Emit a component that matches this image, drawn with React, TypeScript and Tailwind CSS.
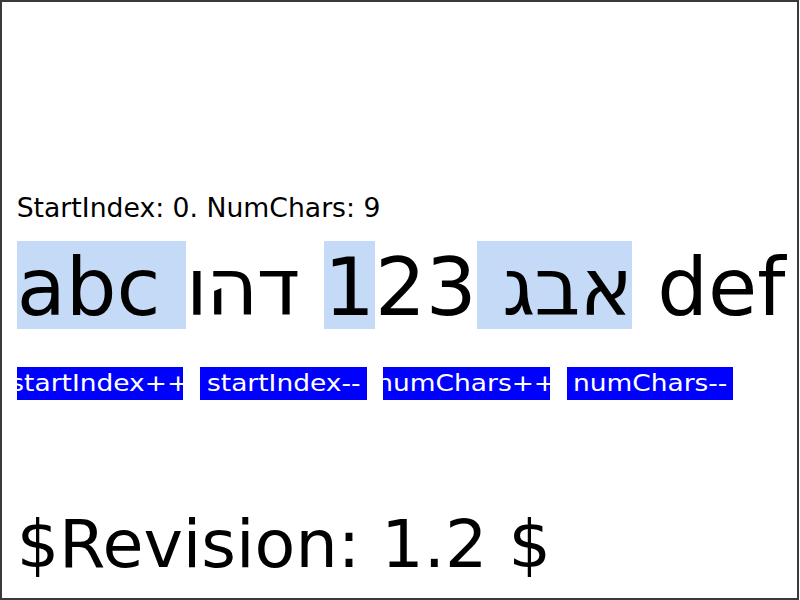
import React from "react";

const buttons = ["startIndex++", "startIndex--", "numChars++", "numChars--"];

const App: React.FC = () => {
  return (
    <div className="w-[800px] h-[600px] bg-white font-['DejaVu_Sans',sans-serif] text-black">
      <div className="w-[799px] h-[600px] border-2 border-[#3a3a3a] pl-[14.67px] pt-[190px] flex flex-col">
        <div className="text-[26.67px] leading-[32px] whitespace-pre">
          StartIndex: 0. NumChars: 9
        </div>

        {/* selected range: first 9 chars, bidi splits it into pieces */}
        <div className="mt-[17px] text-[80px] leading-[93px] whitespace-pre">
          <span className="box-decoration-clone bg-[linear-gradient(#c4daf6,#c4daf6)] bg-no-repeat bg-[length:100%_88px]">
            abc <span className="tracking-[-1px]">אבג</span> 1
          </span>
          23 <span className="tracking-[-1.67px]">דהו</span> def
        </div>

        <div className="mt-[32.67px] flex gap-[16.67px]">
          {buttons.map((label) => (
            <div
              key={label}
              className="w-[166.67px] h-[33.33px] bg-[#0000ff] flex justify-center whitespace-nowrap"
            >
              <span className="block scale-x-[1.15] text-white text-[23px] leading-[33.33px]">
                {label}
              </span>
            </div>
          ))}
        </div>

        <div className="mt-[105px] text-[66.67px] leading-[78px] whitespace-pre">
          $Revision: 1.2 $
        </div>
      </div>
    </div>
  );
};

export default App;
